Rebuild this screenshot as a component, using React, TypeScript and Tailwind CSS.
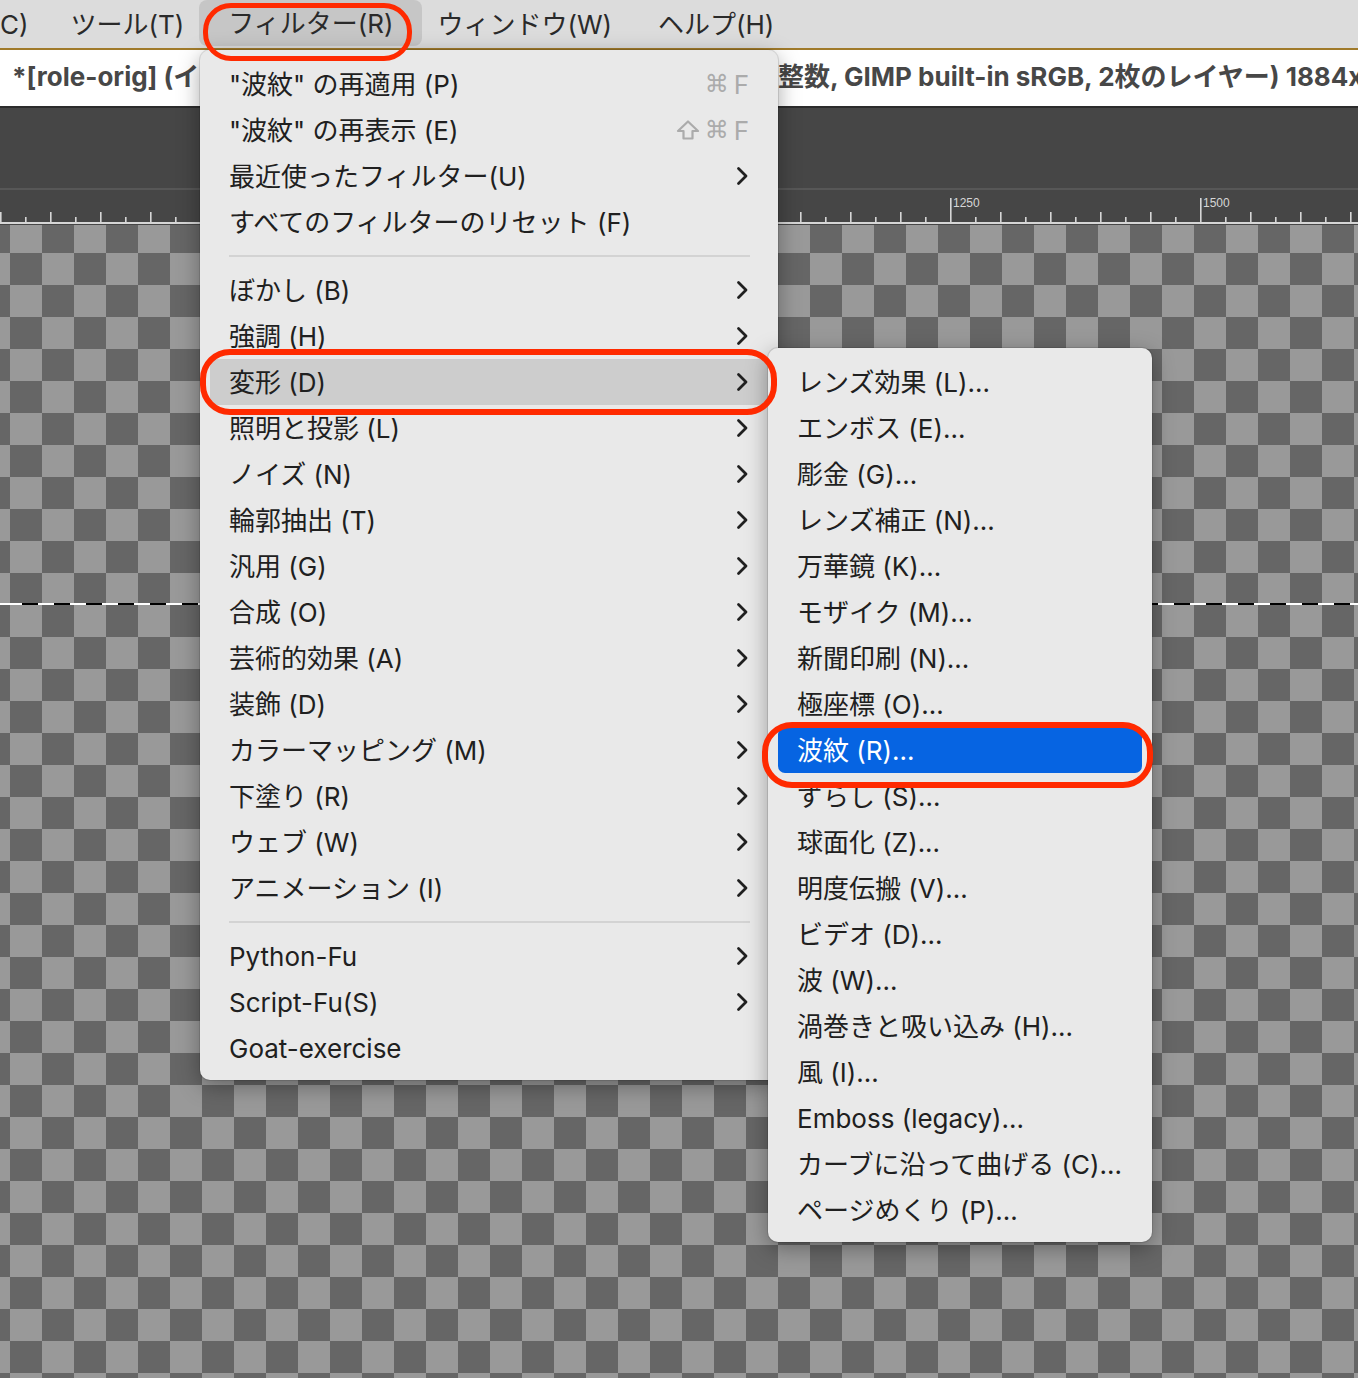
import React from 'react';

type Row =
  | { kind: 'sep' }
  | { kind: 'item'; label: string; keys?: string[]; sub?: boolean; hover?: boolean; selected?: boolean };

const item = (label: string, extra: Partial<Omit<Extract<Row, { kind: 'item' }>, 'kind' | 'label'>> = {}): Row => ({
  kind: 'item',
  label,
  ...extra,
});

const filtersMenu: Row[] = [
  item('"波紋" の再適用 (P)', { keys: ['⌘', 'F'] }),
  item('"波紋" の再表示 (E)', { keys: ['shift', '⌘', 'F'] }),
  item('最近使ったフィルター(U)', { sub: true }),
  item('すべてのフィルターのリセット (F)'),
  { kind: 'sep' },
  item('ぼかし (B)', { sub: true }),
  item('強調 (H)', { sub: true }),
  item('変形 (D)', { sub: true, hover: true }),
  item('照明と投影 (L)', { sub: true }),
  item('ノイズ (N)', { sub: true }),
  item('輪郭抽出 (T)', { sub: true }),
  item('汎用 (G)', { sub: true }),
  item('合成 (O)', { sub: true }),
  item('芸術的効果 (A)', { sub: true }),
  item('装飾 (D)', { sub: true }),
  item('カラーマッピング (M)', { sub: true }),
  item('下塗り (R)', { sub: true }),
  item('ウェブ (W)', { sub: true }),
  item('アニメーション (I)', { sub: true }),
  { kind: 'sep' },
  item('Python-Fu', { sub: true }),
  item('Script-Fu(S)', { sub: true }),
  item('Goat-exercise'),
];

const distortsMenu: Row[] = [
  item('レンズ効果 (L)...'),
  item('エンボス (E)...'),
  item('彫金 (G)...'),
  item('レンズ補正 (N)...'),
  item('万華鏡 (K)...'),
  item('モザイク (M)...'),
  item('新聞印刷 (N)...'),
  item('極座標 (O)...'),
  item('波紋 (R)...', { selected: true }),
  item('ずらし (S)...'),
  item('球面化 (Z)...'),
  item('明度伝搬 (V)...'),
  item('ビデオ (D)...'),
  item('波 (W)...'),
  item('渦巻きと吸い込み (H)...'),
  item('風 (I)...'),
  item('Emboss (legacy)...'),
  item('カーブに沿って曲げる (C)...'),
  item('ページめくり (P)...'),
];

const Chevron = () => (
  <svg width="13" height="20" viewBox="0 0 13 20" fill="none">
    <path d="M2.5 2.5l7.5 7.5-7.5 7.5" stroke="#202020" strokeWidth="2.8" strokeLinecap="round" strokeLinejoin="round" />
  </svg>
);

const ShiftKey = () => (
  <svg width="24" height="22" viewBox="0 0 24 22" fill="none">
    <path d="M12 2.5L22 12h-5.5v7.5h-9V12H2z" stroke="#ababab" strokeWidth="2.2" strokeLinejoin="round" />
  </svg>
);

const MenuRows = ({ rows }: { rows: Row[] }) => (
  <>
    {rows.map((row, i) =>
      row.kind === 'sep' ? (
        <div key={i} className="flex h-[22px] items-center pl-[29px] pr-[28px]">
          <div className="h-[2px] w-full bg-[#d3d3d3]" />
        </div>
      ) : (
        <div
          key={i}
          className={`mx-[10px] flex h-[46px] items-center justify-between rounded-[7px] pl-[19px] pr-[19px] ${
            row.hover ? 'bg-[#cdcdcd]' : ''
          } ${row.selected ? 'bg-[#0664e2] text-white' : 'text-[#202020]'}`}
        >
          <span className="whitespace-nowrap">{row.label}</span>
          {row.keys && (
            <span className="flex items-center gap-[5px] text-[#ababab]">
              {row.keys.map((k, j) =>
                k === 'shift' ? (
                  <ShiftKey key={j} />
                ) : (
                  <span key={j} className={k === 'F' ? '' : "font-['DejaVu_Sans',sans-serif] text-[24px]"}>
                    {k}
                  </span>
                )
              )}
            </span>
          )}
          {row.sub && <Chevron />}
        </div>
      )
    )}
  </>
);

const Ruler = () => {
  const ticks: React.ReactNode[] = [];
  for (let x = 0; x <= 1358; x += 25) {
    const major = (x - 200) % 250 === 0;
    const medium = x % 50 === 0;
    const y1 = major ? 8 : medium ? 22 : 27;
    ticks.push(<rect key={x} x={x} y={y1} width={1.6} height={32 - y1} fill="#d6d6d6" />);
    // labels left of 778 are hidden by the open menu
    if (major && x > 778) {
      ticks.push(
        <text key={`t${x}`} x={x + 3} y={17} fontSize={12} fill="#d6d6d6" fontFamily="Liberation Sans, sans-serif">
          {x - 950 + 1250}
        </text>
      );
    }
  }
  return (
    <svg width="1358" height="35" className="block">
      {ticks}
      <rect x={0} y={32} width={1358} height={2} fill="#d6d6d6" />
    </svg>
  );
};

export default function App() {
  return (
    <div className="relative flex h-[1378px] w-[1358px] flex-col overflow-hidden bg-[#464646] font-['Inter','Noto_Sans_CJK_JP',sans-serif] text-[26px]">
      {/* menu bar */}
      <div className="flex h-[48px] items-center bg-[#dcdcdc] text-[#2a2a2a]">
        <span className="pr-[20px]">C)</span>
        <span className="px-[22px]">ツール(T)</span>
        <span className="-mx-[7px] flex h-[46px] items-center self-start rounded-[8px] bg-[#c6c6c6] px-[29px]">フィルター(R)</span>
        <span className="px-[22px]">ウィンドウ(W)</span>
        <span className="px-[24px]">ヘルプ(H)</span>
      </div>
      <div className="h-[2px] bg-[#a07a2a]" />

      {/* title bar (middle part sits under the open menu) */}
      <div className="flex h-[56px] items-center whitespace-nowrap bg-white pb-[3px] pl-[12px] font-bold text-[#474747]">
        <span className="w-[188px] shrink-0 overflow-hidden">*[role-orig] (イン</span>
        <span className="ml-[578px]">整数, GIMP built-in sRGB, 2枚のレイヤー) 1884x1216 – GIMP</span>
      </div>

      {/* dock area */}
      <div className="h-[82px] border-t-2 border-[#2c2c2c] bg-[#464646]" />
      <div className="h-[2px] bg-[#575757]" />
      <Ruler />

      {/* canvas */}
      <div className="flex-1 bg-[conic-gradient(#999_25%,#666_0_50%,#999_0_75%,#666_0)] pt-[378px] [background-position:10px_28px] [background-size:64px_64px]">
        <div className="h-[2px] bg-[repeating-linear-gradient(90deg,#fff_0_16px,#000_16px_32px)] [background-position:6px_0]" />
      </div>

      {/* Filters menu */}
      <div className="absolute left-[200px] top-[50px] w-[578px] rounded-[10px] bg-[#e9e9e9] pb-[9px] pt-[11px] shadow-[0_6px_22px_rgba(0,0,0,0.35),0_0_0_1px_rgba(0,0,0,0.1)]">
        <MenuRows rows={filtersMenu} />
      </div>

      {/* Distorts submenu */}
      <div className="absolute left-[768px] top-[348px] w-[384px] rounded-[10px] bg-[#e9e9e9] pb-[9px] pt-[11px] shadow-[0_6px_22px_rgba(0,0,0,0.35),0_0_0_1px_rgba(0,0,0,0.1)]">
        <MenuRows rows={distortsMenu} />
      </div>

      {/* annotation rings */}
      <div className="absolute left-[203px] top-[3px] h-[58px] w-[209px] rounded-[28px] border-[5px] border-[#ff2a00]" />
      <div className="absolute left-[200px] top-[349px] h-[66px] w-[577px] rounded-[30px] border-[6px] border-[#ff2a00]" />
      <div className="absolute left-[762px] top-[722px] h-[66px] w-[391px] rounded-[30px] border-[6px] border-[#ff2a00]" />
    </div>
  );
}
